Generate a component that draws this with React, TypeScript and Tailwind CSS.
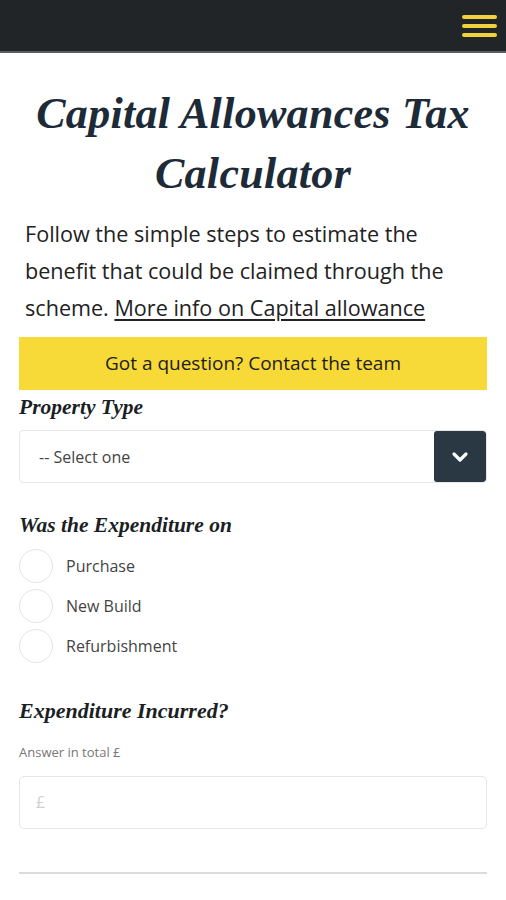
import { useState } from 'react'

const options = ['Purchase', 'New Build', 'Refurbishment']

const serif = "font-['Liberation_Serif',serif] italic font-bold text-[#1b1f24]"

const App = () => {
   const [choice, setChoice] = useState('')

   return (
      <div className="min-h-screen bg-white font-['Open_Sans',sans-serif]">
         <header className="h-[53px] bg-[#222528] border-b-2 border-[#5a5d60] flex items-center justify-end pr-[9px]">
            <button className="flex flex-col gap-[5px] w-[35px]">
               <span className="h-[4px] rounded-full bg-[#f2d23a]" />
               <span className="h-[4px] rounded-full bg-[#f2d23a]" />
               <span className="h-[4px] rounded-full bg-[#f2d23a]" />
            </button>
         </header>

         <main className="px-[19px]">
            <h1
               className={`${serif} text-[#1d2b38] text-center text-[44px] leading-[60px] mt-[31px] tracking-[0.3px]`}
            >
               Capital Allowances Tax Calculator
            </h1>

            <p className="mt-[11px] pl-[6px] pr-[12px] text-[21.6px] leading-[37px] text-[#222]">
               Follow the simple steps to estimate the benefit that could be claimed through the scheme.{' '}
               <a href="#" className="underline underline-offset-[3px]">
                  More info on Capital allowance
               </a>
            </p>

            <button className="mt-[11px] w-full h-[53px] bg-[#f7d938] text-[19px] text-[#1d1d1d]">
               Got a question? Contact the team
            </button>

            <label className={`${serif} block text-[21.5px] leading-[22px] mt-[6px]`}>Property Type</label>
            <div className="mt-[12px] flex h-[53px] rounded-[4px] border border-[#e6e6e6] overflow-hidden">
               <div className="flex-1 flex items-center pl-[19px] text-[16px] text-[#444]">-- Select one</div>
               <div className="w-[52px] bg-[#2a3844] flex items-center justify-center rounded-[3px]">
                  <svg width="18" height="12" viewBox="0 0 18 12" fill="none">
                     <path d="M3 3l6 6 6-6" stroke="white" strokeWidth="3.2" strokeLinecap="round" strokeLinejoin="round" />
                  </svg>
               </div>
            </div>

            <h2 className={`${serif} text-[21.5px] leading-[22px] mt-[31px]`}>Was the Expenditure on</h2>
            <div className="mt-[13px] flex flex-col gap-[6px]">
               {options.map(opt => (
                  <label key={opt} className="flex items-center gap-[13px] cursor-pointer" onClick={() => setChoice(opt)}>
                     <span className="w-[34px] h-[34px] rounded-full border border-[#e4e4e4] flex items-center justify-center">
                        {choice === opt && <span className="w-[16px] h-[16px] rounded-full bg-[#2a3844]" />}
                     </span>
                     <span className="text-[16px] text-[#444]">{opt}</span>
                  </label>
               ))}
            </div>

            <h2 className={`${serif} text-[22px] leading-[24px] mt-[36px]`}>Expenditure Incurred?</h2>
            <p className="mt-[20px] text-[13px] text-[#777]">Answer in total £</p>
            <input
               placeholder="£"
               className="mt-[13px] w-full h-[53px] rounded-[5px] border border-[#e6e6e6] px-[16px] text-[16px] placeholder:text-[#d0d0d0] outline-none"
            />

            <hr className="mt-[43px] border-t-2 border-[#dcdcdc]" />
         </main>
      </div>
   )
}

export default App
